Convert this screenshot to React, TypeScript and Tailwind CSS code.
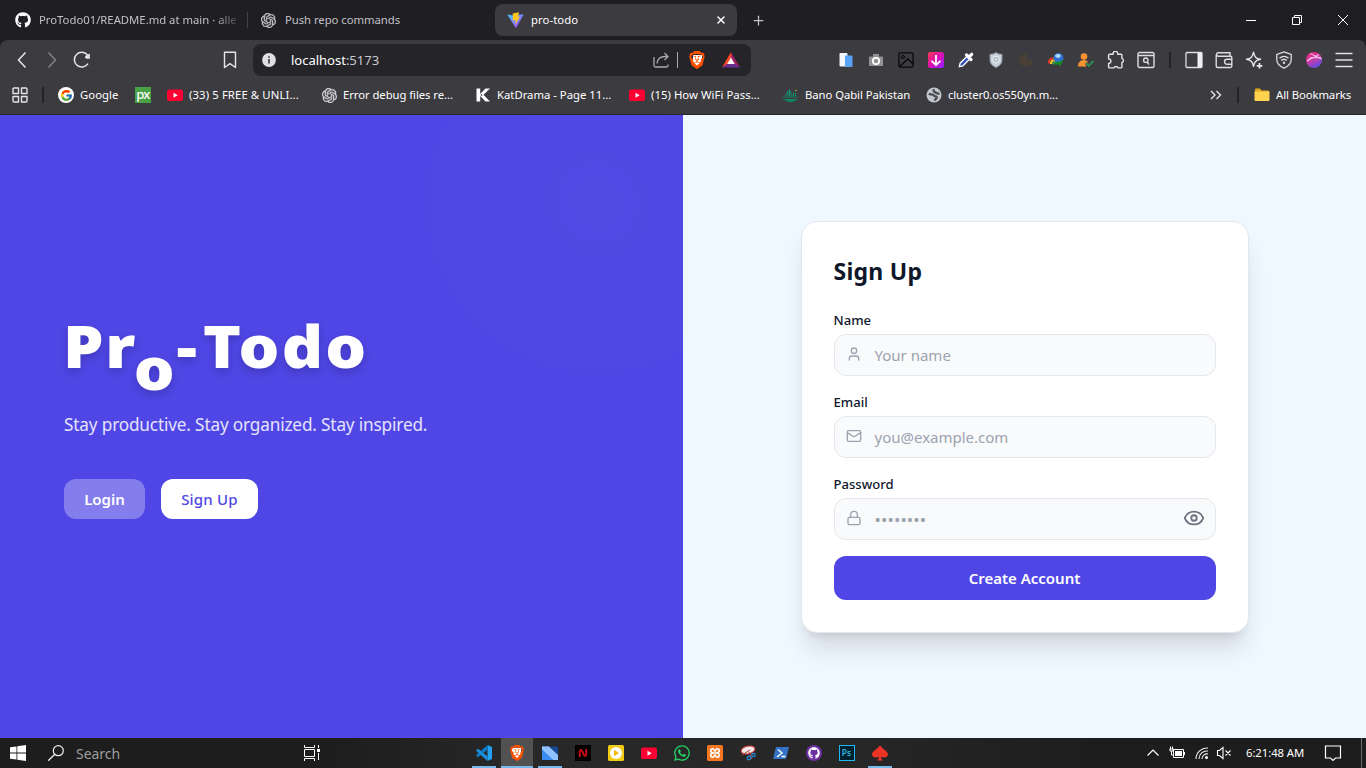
import React from "react";
import { User, Mail, Lock, Eye, X, Plus, Moon } from "lucide-react";
import { FaGithub, FaWhatsapp } from "react-icons/fa";
import { FcGoogle } from "react-icons/fc";
import { SiOpenai, SiBrave } from "react-icons/si";

type SvgProps = { className?: string; box?: string; children: React.ReactNode };

function Svg({ className = "size-4", box = "0 0 16 16", children }: SvgProps) {
  return (
    <svg viewBox={box} className={`shrink-0 ${className}`} fill="none">
      {children}
    </svg>
  );
}

function YouTube() {
  return (
    <Svg>
      <rect x="0" y="2.5" width="16" height="11.5" rx="2.6" fill="#ff0033" />
      <path d="M6.5 5.8v5l4.2-2.5z" fill="#fff" />
    </Svg>
  );
}

function BraveLion({ className }: { className: string }) {
  return (
    <span className={`relative flex shrink-0 items-center justify-center ${className}`}>
      <span className="h-[11px] w-[9px] rounded-b-[4px] bg-white" />
      <SiBrave className="absolute inset-0 size-full text-[#ff5000]" />
    </span>
  );
}

function ViteLogo() {
  return (
    <Svg className="size-[17px]">
      <defs>
        <linearGradient id="vite" x1="0" y1="0" x2="1" y2="1">
          <stop stopColor="#41d1ff" />
          <stop offset="1" stopColor="#bd34fe" />
        </linearGradient>
      </defs>
      <path d="M0.3 2.4 6 3.2l4.6-.9 5.1.1L8.4 15.4z" fill="url(#vite)" />
      <path d="M5.4 1.3 11.4.3l-1.4 4.2 2.2-.4-4.2 8 .2-4.6-2.6.5z" fill="#ffc81f" />
    </Svg>
  );
}

function TabStrip() {
  return (
    <div className="flex h-10 items-center bg-[#1f1e23] text-[11.3px] text-[#c2c1c6]">
      <div className="flex w-[247px] items-center pl-[15px]">
        <FaGithub className="size-4 shrink-0 text-white" />
        <span className="ml-2 whitespace-nowrap [mask-image:linear-gradient(to_right,black_88%,rgba(0,0,0,0.2))]">
          ProTodo01/README.md at main · alle
        </span>
      </div>
      <div className="h-4 w-px bg-[#414046]" />
      <div className="flex w-[247px] items-center pl-[13px]">
        <SiOpenai className="size-[15px] shrink-0" stroke="currentColor" strokeWidth={0.6} />
        <span className="ml-[9px] whitespace-nowrap tracking-[-0.04px]">Push repo commands</span>
      </div>
      <div className="flex h-8 w-[242px] items-center rounded-lg bg-[#3c3b40] pl-3 pr-[10px] text-white">
        <ViteLogo />
        <span className="ml-[7px] flex-1 tracking-[0.08px]">pro-todo</span>
        <X className="size-3" strokeWidth={3} />
      </div>
      <Plus className="ml-[14px] size-[15px]" strokeWidth={2} />
      <div className="ml-auto flex h-full text-white">
        <div className="flex w-[46px] items-center justify-center">
          <Svg className="size-[10px]" box="0 0 10 10"><path d="M0 5.5h10" stroke="currentColor" /></Svg>
        </div>
        <div className="flex w-[46px] items-center justify-center">
          <Svg className="size-[10px]" box="0 0 10 10"><path d="M.5 2.5h7v7h-7zM2.500 2.500v-2h7v7h-2" stroke="currentColor" /></Svg>
        </div>
        <div className="flex w-[46px] items-center justify-center">
          <Svg className="size-[10px]" box="0 0 10 10"><path d="m0 0 10 10M10 0 0 10" stroke="currentColor" /></Svg>
        </div>
      </div>
    </div>
  );
}

const extensions: React.ReactNode[] = [
  <Svg>
    <rect x="1.5" y="1" width="8" height="13.5" rx="1" fill="#f4f7fb" />
    <rect x="7" y="3.5" width="7.5" height="11.5" rx="1" fill="#5aa2f5" />
  </Svg>,
  <Svg>
    <path d="M5 2h6v2.5h3a1 1 0 0 1 1 1V14H1V5.5a1 1 0 0 1 1-1h3z" fill="#929292" />
    <circle cx="8" cy="9" r="3.2" stroke="#fff" strokeWidth="1.7" />
  </Svg>,
  <Svg>
    <rect x=".9" y=".9" width="14.2" height="14.2" rx="1.5" stroke="#08080a" strokeWidth="1.3" />
    <circle cx="5" cy="5" r="1.5" stroke="#08080a" strokeWidth="1.2" />
    <path d="m2 14 8-7 5 5" stroke="#08080a" strokeWidth="1.3" />
  </Svg>,
  <Svg>
    <defs>
      <linearGradient id="dl" x1="0" y1="0" x2="1" y2="1">
        <stop stopColor="#fa3c50" /><stop offset=".5" stopColor="#dc10b4" /><stop offset="1" stopColor="#8c20ff" />
      </linearGradient>
    </defs>
    <rect width="16" height="16" rx="2" fill="url(#dl)" />
    <path d="M8 3v10M3.5 8.8 8 13l4.500-4.200" stroke="#fff" strokeWidth="1.8" />
  </Svg>,
  <Svg>
    <path d="m1.300 14.700.8-3.500L9.500 3.800l2.700 2.700L4.800 13.900z" fill="#3458b8" stroke="#fff" strokeWidth="1.3" />
    <path d="m8.500 3 4.500 4.500M11 5l2.700-2.700" stroke="#fff" strokeWidth="3.2" strokeLinecap="round" />
  </Svg>,
  <Svg>
    <path d="M8 .5c2 1.500 4 1.800 6 1.800V8c0 4-3 6-6 7.500C5 14 2 12 2 8V2.300c2 0 4-.3 6-1.800z" fill="#c8d0d8" stroke="#8795a4" />
    <circle cx="8" cy="7.500" r="3.300" fill="#a7b6c5" stroke="#f4f7fa" />
    <circle cx="8" cy="7.500" r="1.200" fill="#e6ecf2" />
  </Svg>,
  <Moon className="size-[16px] text-[#4b4035]" fill="#4b4035" />,
  <Svg>
    <path d="M1 11.500c-.5-5.500 6-7.500 9.500-2" stroke="#e33c23" strokeWidth="2" />
    <path d="M3 12c0-4 4-5 6-2" stroke="#f6c829" strokeWidth="2" />
    <path d="M5 12.500c0-2 2-3 4-1.500" stroke="#39b54a" strokeWidth="1.500" />
    <circle cx="10.500" cy="5.900" r="4.900" fill="#2f6fd0" />
    <path d="M7 3.500c1.500-2 4.500-2 5.500-.5s-1 3-2.500 3-3-1-3-2.500z" fill="#a9d8f8" />
    <path d="M5.500 9.800c3 .8 6 .5 10-2.300L12 14.800l-1-2.300H6l2-1.500z" fill="#128c1d" />
  </Svg>,
  <Svg>
    <circle cx="6" cy="4.500" r="3.300" fill="#fa9433" />
    <path d="M0 14.500c0-8 10-8 10.500-3l-2.500 3z" fill="#fa9433" />
    <path d="m8 11 3 3.200 4.700-5.400" stroke="#3c3b40" strokeWidth="3" />
    <path d="m8.300 11.300 2.500 2.700 4.700-5.200" stroke="#25a45a" strokeWidth="1.500" />
  </Svg>,
  <Svg className="size-[18px]" box="0 0 18 18">
    <path d="M2.500 3.200H6.200a2.300 2.300 0 1 1 4.400 0H14a.9.900 0 0 1 .9.900V7.300a2.200 2.200 0 0 1 0 4.200V16a.9.900 0 0 1-.9.900H11.200a2.300 2.300 0 0 0-4.200 0H2.500a.9.900 0 0 1-.9-.9V12.500a2.200 2.200 0 0 0 0-4.600V4.100a.9.900 0 0 1 .9-.9z" stroke="#e4e3e8" strokeWidth="1.400" strokeLinejoin="round" />
  </Svg>,
  <Svg className="size-[18px]" box="0 0 18 18">
    <rect x="1" y="1.500" width="16" height="15" rx="1.500" stroke="#dedde2" strokeWidth="1.400" />
    <path d="M1 4.500h16m-5 9-2-2.500" stroke="#dedde2" strokeWidth="1.400" />
    <circle cx="8.800" cy="9.200" r="2.200" stroke="#dedde2" strokeWidth="1.400" />
  </Svg>,
];

const browserTools: React.ReactNode[] = [
  <Svg className="size-[18px]" box="0 0 18 18">
    <rect x="1" y="1.500" width="16" height="15" rx="1" stroke="#dedde2" strokeWidth="1.300" />
    <path d="M12.500 1.500H17v15h-4.500z" fill="#f0eff4" />
  </Svg>,
  <Svg className="size-[18px]" box="0 0 18 18">
    <path d="M16 5.200H3A1.800 1.800 0 0 1 3 1.700h12v3.500M1.200 3.500V15a1.500 1.500 0 0 0 1.500 1.500h12.600A1.500 1.500 0 0 0 16.800 15V6.500a1.300 1.300 0 0 0-1.300-1.300M16.800 8.200H12a2.500 2.500 0 0 0 0 5h4.800" stroke="#dedde2" strokeWidth="1.400" />
  </Svg>,
  <Svg className="size-[18px]" box="0 0 18 18">
    <path d="M8.500 1.200c.9 4.700 2.300 6.200 7 7.100-4.700.9-6.100 2.300-7 7.100-.9-4.800-2.300-6.200-7-7.100 4.700-.9 6.100-2.400 7-7.100z" stroke="#e8e7ec" strokeWidth="1.400" strokeLinejoin="round" />
    <path d="M14.500 11v7" stroke="#3c3b40" strokeWidth="5" />
    <path d="M14.500 12v5.500m-2.800-2.700h5.600" stroke="#e8e7ec" strokeWidth="1.700" />
  </Svg>,
  <Svg className="size-[18px]" box="0 0 18 18">
    <path d="M9 .9 16.200 3.500v5.300c0 4-3 6.500-7.200 8.400-4.200-1.900-7.200-4.400-7.200-8.400V3.500z" stroke="#dedde2" strokeWidth="1.300" />
    <path d="M4.500 7.200c2.600-2.300 6.400-2.300 9 0M6.200 9.500c1.600-1.500 4-1.500 5.600 0" stroke="#dedde2" strokeWidth="1.400" />
    <circle cx="9" cy="11.700" r="1.200" fill="#dedde2" />
  </Svg>,
  <Svg>
    <defs>
      <linearGradient id="leo" x1=".2" y1="0" x2=".7" y2="1">
        <stop stopColor="#f0267c" /><stop offset=".5" stopColor="#c33ca8" /><stop offset="1" stopColor="#544fe8" />
      </linearGradient>
    </defs>
    <circle cx="8" cy="8" r="8" fill="url(#leo)" />
    <path d="M1 9 13 2.500M4 1.500l12 5.500M1 9l4-3.500L15 6" stroke="#fbd5ec" strokeWidth=".9" />
  </Svg>,
  <Svg className="size-[18px]" box="0 0 18 18"><path d="M.5 2.500h17M.5 9h17M.5 15.500h17" stroke="#e0dfe4" strokeWidth="1.700" /></Svg>,
];

function Toolbar() {
  return (
    <div className="flex h-10 items-center text-[#e6e5ea]">
      <div className="flex w-[220px] items-center pl-[13px]">
        <Svg className="size-[18px]" box="0 0 18 18"><path d="M12.500 1.500 5.500 9l7 7.500" stroke="currentColor" strokeWidth="1.500" /></Svg>
        <Svg className="ml-3 size-[18px] text-[#84838a]" box="0 0 18 18"><path d="m5.500 1.500 7 7.500-7 7.500" stroke="currentColor" strokeWidth="1.500" /></Svg>
        <Svg className="ml-3 size-[18px]" box="0 0 18 18">
          <path d="M15 12.600A7.400 7.400 0 1 1 14.500 4" stroke="currentColor" strokeWidth="1.500" />
          <path d="M16.800 2.500v5.300h-3.500a2 2 0 0 1-1-2.800z" fill="currentColor" />
        </Svg>
      </div>
      <Svg className="size-5" box="0 0 20 20">
        <path d="M4.500 2.300h11v15.200L10 13.600l-5.500 3.900z" stroke="currentColor" strokeWidth="1.400" strokeLinejoin="round" />
      </Svg>
      <div className="ml-[13px] flex h-8 w-[498px] items-center rounded-lg bg-[#252429] pl-[9px] text-[13.1px]">
        <Svg className="size-[14px]" box="0 0 14 14">
          <circle cx="7" cy="7" r="6.900" fill="#dfdee3" />
          <path d="M7 6v4.500M7 3.300v1.500" stroke="#29282d" strokeWidth="1.500" />
        </Svg>
        <span className="ml-[15px] flex-1 pt-px tracking-[-0.05px] text-white">localhost<span className="text-[#c7c6cc]">:5173</span></span>
        <Svg className="size-4 text-[#a9a8ae]">
          <path d="M1 5v8.500A1.500 1.500 0 0 0 2.500 15h11a1.500 1.500 0 0 0 1.500-1.500v-1M4 11.500c.5-4.500 3-7 8-7H15M11.500 1 15 4.500 11.500 8" stroke="currentColor" strokeWidth="1.300" />
        </Svg>
        <div className="ml-2 h-4 w-px bg-[#a9a8ae]" />
        <BraveLion className="ml-[10px] size-[18px]" />
        <Svg className="ml-4 mr-[11px] size-[18px]" box="0 0 18 18">
          <path d="M9 1 0 16.500l5-2.500L9 7z" fill="#ff4724" />
          <path d="m9 1 9 15.500-5-2.500L9 7z" fill="#9e1f63" />
          <path d="M0 16.500h18L13 13H5z" fill="#662d91" />
          <path d="M9 6.500 12.800 13H5.200z" fill="#fff" />
        </Svg>
      </div>
      <div className="ml-auto flex">
        {extensions.map((icon, i) => (
          <div key={i} className="flex w-[30px] items-center justify-center">{icon}</div>
        ))}
      </div>
      <div className="ml-2 mr-2 h-4 w-0.5 bg-[#242328]" />
      <div className="mr-[7px] flex">
        {browserTools.map((icon, i) => (
          <div key={i} className="flex w-[30px] items-center justify-center">{icon}</div>
        ))}
      </div>
    </div>
  );
}

const bookmarks: { icon: React.ReactNode; label: string; box: string }[] = [
  { icon: <span className="flex size-4 items-center justify-center rounded-full bg-white"><FcGoogle className="size-[13px]" /></span>, label: "Google", box: "w-[77px] tracking-[0.05px]" },
  { icon: <span className="flex size-4 items-center justify-center bg-[#48a147] pb-0.5 text-[13px] leading-none font-medium tracking-[-0.6px]">px</span>, label: "", box: "w-8" },
  { icon: <YouTube />, label: "(33) 5 FREE & UNLI...", box: "w-[154px] tracking-[0.12px]" },
  {
    icon: <SiOpenai className="size-[15px] text-[#d5d4d8]" stroke="currentColor" strokeWidth={0.6} />,
    label: "Error debug files re...", box: "w-[154px] tracking-[-0.06px]",
  },
  {
    icon: <Svg><path d="M1.500 1.500h3.700v5.600L10.500 1.500H15L8.500 7.800 15 14.500h-4.500L5.200 9v5.500H1.500z" fill="#fff" /><path d="m5.500 8 1-1 1 1.200-.8.900z" fill="#3c3b40" /></Svg>,
    label: "KatDrama - Page 11...", box: "w-[154px]",
  },
  { icon: <YouTube />, label: "(15) How WiFi Pass...", box: "w-[154px] tracking-[0.06px]" },
  {
    icon: <Svg><path d="M0 10h14.500M2 12.500c3 2.500 8 2.500 11 0z" stroke="#118663" strokeWidth="1.200" fill="#118663" /><path d="M2.500 9 5 4v5M6.500 9V2.500l2.500 6.500M10.500 9V5M12.500 9V6" stroke="#129371" /><circle cx="13" cy="3.500" r=".8" fill="#b7c83d" /></Svg>,
    label: "Bano Qabil Pakistan", box: "w-[143px] tracking-[-0.06px]",
  },
  {
    icon: <Svg><circle cx="8" cy="8" r="7.500" fill="#c3c7cb" /><path d="M2.800 6.800c1.800 1 3.700.2 5 1.700s2.700.2 3 1.700-1.600 1.700-2.100 3.400M7.300 2.200c.5 1.300 0 2.300 1.500 2.900s2 2 4.700 1.300" stroke="#4a4b50" strokeWidth="2.300" /></Svg>,
    label: "cluster0.os550yn.m...", box: "w-[140px] tracking-[-0.12px]",
  },
];

function BookmarkBar() {
  return (
    <div className="flex h-[34px] items-center pb-1 text-[11.3px] whitespace-nowrap text-white">
      <Svg className="ml-3 size-4">
        <path d="M1 2a1 1 0 0 1 1-1h4.500v5.500H1zM9.500 1H14a1 1 0 0 1 1 1v4.500H9.500zM1 9.500h5.500V15H2a1 1 0 0 1-1-1zM9.500 9.500H15V14a1 1 0 0 1-1 1H9.500z" stroke="#e4e3e8" strokeWidth="1.400" strokeLinejoin="round" />
      </Svg>
      <div className="mr-[14px] ml-[14px] h-4 w-0.5 bg-[#242328]" />
      {bookmarks.map((b, i) => (
        <div key={i} className={`flex shrink-0 items-center gap-[6px] ${b.box}`}>
          <span className="flex w-4 shrink-0 justify-center">{b.icon}</span>
          {b.label && <span>{b.label}</span>}
        </div>
      ))}
      <Svg className="mr-[-1px] ml-auto size-3" box="0 0 12 12"><path d="m1 2 4 4-4 4M6.500 2l4 4-4 4" stroke="#e4e3e8" strokeWidth="1.400" /></Svg>
      <div className="ml-4 h-4 w-0.5 bg-[#242328]" />
      <Svg className="ml-[15px] size-4">
        <path d="M1 2.500a1 1 0 0 1 1-1h4l1.500 2H14a1 1 0 0 1 1 1V13H1z" fill="#e5a91e" />
        <path d="M.5 4.500h15V13a1 1 0 0 1-1 1h-13a1 1 0 0 1-1-1z" fill="#ffd24f" />
      </Svg>
      <span className="mr-[14px] ml-[6px] w-[76px] tracking-[-0.08px]">All Bookmarks</span>
    </div>
  );
}

function Hero() {
  return (
    <section className="flex w-1/2 flex-col bg-[#4f46e5] bg-[radial-gradient(circle_at_597px_88px,rgba(255,255,255,0.022),transparent_195px)] pt-[194px] pl-16 text-white">
      <h1 className="-ml-px flex h-[72px] origin-left scale-x-[1.09] items-center font-['Noto_Sans',sans-serif] text-[59px] leading-none font-black tracking-[1.5px] [text-shadow:0_4px_8px_rgba(0,0,0,0.18)]">
        <span>Pr</span>
        <span className="relative top-[22px] -ml-[3px]">o</span>
        <span>-</span>
        <span className="ml-1 tracking-[2px]">Todo</span>
      </h1>
      <p className="mt-[30px] h-7 text-[17.2px] leading-7 tracking-[-0.16px] whitespace-nowrap text-white/85">
        Stay productive. Stay organized. Stay inspired.
      </p>
      <div className="mt-10 flex gap-4 text-[15px] font-semibold">
        <button className="h-10 w-[81px] rounded-xl bg-white/30">Login</button>
        <button className="h-10 w-[97px] rounded-xl bg-white font-medium tracking-[0.2px] text-[#4f46e5]">Sign Up</button>
      </div>
    </section>
  );
}

type FieldProps = {
  label: string;
  icon: React.ReactNode;
  placeholder: React.ReactNode;
  trailing?: React.ReactNode;
};

function Field({ label, icon, placeholder, trailing }: FieldProps) {
  return (
    <div className="mb-4">
      <div className="mb-1 h-5 text-[13.1px] leading-5 font-medium">{label}</div>
      <div className="flex h-[42px] items-center rounded-xl border border-gray-200 bg-[#f9fafb] pr-[10px] pl-[11px]">
        <span className="flex w-4 justify-center pb-0.5 text-[#9ca3af]">{icon}</span>
        <span className="ml-[13px] flex h-10 flex-1 items-center pt-0.5 text-[15px] text-[#9ca3af]">{placeholder}</span>
        {trailing}
      </div>
    </div>
  );
}

function SignUpPanel() {
  return (
    <section className="flex w-1/2 items-center justify-center bg-[#f0f8ff] text-[#0f172a]">
      <div className="h-[412px] w-[448px] rounded-2xl border border-[#e2e8f0] bg-white p-8 shadow-[0_20px_25px_-5px_rgba(0,0,0,0.12),0_8px_10px_-6px_rgba(0,0,0,0.1)]">
        <h2 className="mb-6 h-8 pt-px text-[23px] leading-8 font-bold tracking-[0.25px]">Sign Up</h2>
        <Field label="Name" placeholder="Your name" icon={<User className="size-4 shrink-0" strokeWidth={2} />} />
        <Field label="Email" placeholder="you@example.com" icon={<Mail className="size-4 shrink-0" strokeWidth={2} />} />
        <Field
          label="Password"
          placeholder={<span className="text-[17px] tracking-[0.08px]">••••••••</span>}
          icon={<Lock className="size-4 shrink-0" strokeWidth={2} />}
          trailing={<Eye className="mb-px size-[22px] text-[#6b7280]" strokeWidth={2} />}
        />
        <button className="h-11 w-full rounded-xl bg-[#4f46e5] pt-px text-[15px] font-semibold text-white">Create Account</button>
      </div>
    </section>
  );
}

const apps: { icon: React.ReactNode; line?: string; active?: boolean }[] = [
  {
    icon: <Svg><path d="M11.500 0 16 2v12l-4.500 2z" fill="#23a0ee" /><path d="M11.500 0v4.800L2 12.300.3 11v-.9z" fill="#0f7ac4" /><path d="M11.500 16v-4.800L2 3.700.3 5v.9z" fill="#1b8fdc" /></Svg>,
    line: "w-6",
  },
  { icon: <BraveLion className="size-4" />, line: "w-8", active: true },
  {
    icon: <Svg><path d="M0 1.500h7l9 8.500v5H0z" fill="#2f7be0" /><path d="M0 1.500h7L16 10v5h-5L0 4.500z" fill="#8fc3ff" /><path d="M8 1.500h8v8z" fill="#164b9c" /><path d="M0 4.500V15h11z" fill="#3b8cf2" /></Svg>,
    line: "w-6",
  },
  { icon: <Svg><rect width="16" height="16" fill="#000" /><path d="M4.700 12V6.500c.2-2 1.800-2 2.600-.3l1.600 3.600c.8 1.700 2.300 1.500 2.300-.3V4" stroke="#d90a14" strokeWidth="1.800" /></Svg> },
  { icon: <Svg><rect width="16" height="16" rx="1.500" fill="#f2cb13" /><circle cx="8" cy="8" r="6" fill="#fff" /><path d="M6 4.800v6.400L11 8z" fill="#f2b90f" /></Svg> },
  { icon: <YouTube /> },
  { icon: <FaWhatsapp className="size-[18px] text-[#25d366]" /> },
  {
    icon: <Svg><rect width="16" height="16" rx="1.500" fill="#f37623" /><path d="M6.500 8h3M6.500 8C3 8 3 3.800 5.500 3.800S6.500 6 8 6s0-2.200 2.500-2.200S13 8 9.500 8M6.500 8C3 8 3 12.200 5.500 12.200S6.500 10 8 10s0 2.200 2.500 2.200S13 8 9.500 8" stroke="#fff" strokeWidth="1.600" /></Svg>,
  },
  { icon: <Svg><ellipse cx="8" cy="5" rx="7" ry="3.800" fill="#f1e9e9" stroke="#d33c34" strokeWidth="1" transform="rotate(-12 8 5)" /><path d="m2 10 8-5M9 7l3 7M14 8l-5 4" stroke="#b33a38" /><circle cx="9" cy="13" r="1.800" stroke="#238bd3" strokeWidth="1.300" /><circle cx="13.500" cy="10" r="1.700" stroke="#238bd3" strokeWidth="1.300" /></Svg> },
  { icon: <Svg><path d="M3 2h13l-3 12H0z" fill="#3473c6" /><path d="m5 4.500 4 3.500-5 4M8.500 11.500h4" stroke="#fff" strokeWidth="1.400" /></Svg> },
  { icon: <span className="flex size-4 items-center justify-center rounded-full bg-[#6e2fa0] text-white"><FaGithub className="size-3" /></span> },
  { icon: <span className="flex size-4 items-center justify-center border border-[#1fb9f4] bg-[#03202f] text-[8.5px] leading-none font-medium text-[#31c5f0]">Ps</span> },
  { icon: <Svg><path d="M8 0c2 4 8 6 8 9.500 0 3-4.500 4-7 2 0 2 1 3 2 4H5c1-1 2-2 2-4-2.500 2-7 1-7-2C0 6 6 4 8 0z" fill="#ec3326" /></Svg>, line: "w-6" },
];

function Taskbar() {
  return (
    <div className="flex h-[30px] items-center bg-[linear-gradient(to_right,#1d1d1d_24%,#282828_38%,#272727_62%,#1d1d1d_80%)] text-white">
      <Svg className="ml-[10px] size-4"><path d="M0 2.300 6.500 1.400v6.200H0zM7.300 1.300 16 0v7.600H7.300zM0 8.400h6.500v6.200L0 13.700zM7.300 8.400H16V16l-8.700-1.300z" fill="#fff" /></Svg>
      <Svg className="ml-[22px] size-4"><circle cx="10.300" cy="5.700" r="5" stroke="#eee" strokeWidth="1.200" /><path d="M6.800 9.300.3 15.700" stroke="#eee" strokeWidth="1.300" /></Svg>
      <span className="ml-3 w-[228px] pt-px text-[14px] tracking-[-0.05px] text-[#9d9d9d]">Search</span>
      <Svg><path d="M.5 0v2.500h10V0M.5 16v-2.500h10V16M.5 4.500h10v7H.5zM14.500 0v3M14.500 8v7" stroke="#fff" /><path d="M13 4h3v3h-3z" fill="#fff" /></Svg>
      <div className="ml-[147px] flex h-full">
        {apps.map((a, i) => (
          <div key={i} className="flex w-[33px] justify-center">
            <div className={`flex h-full w-8 flex-col items-center ${a.active ? "bg-[#515151]" : ""}`}>
              <span className="flex h-7 items-center pt-0.5">{a.icon}</span>
              {a.line && <span className={`h-0.5 bg-[#76b9ed] ${a.line}`} />}
            </div>
          </div>
        ))}
      </div>
      <div className="ml-auto flex items-center">
        <Svg className="size-3" box="0 0 12 12"><path d="m.5 8.500 5.500-5.500 5.500 5.500" stroke="#fff" strokeWidth="1.200" /></Svg>
        <Svg className="ml-[10px] size-4"><path d="M4.500 4.500h10v8h-10zM15.500 7v3M.5 4h4M1.500 1.500V4M3.500 1.500V4M1 4v2h3V4M2.500 6v4h2" stroke="#fff" /><path d="M6 6h7v5H6z" fill="#fff" /></Svg>
        <Svg className="ml-[10px] size-[14px]" box="0 0 14 14"><path d="M1 13A11 11 0 0 1 13 2M4 13a8 8 0 0 1 9-8M7 13a5 5 0 0 1 6-5" stroke="#eee" strokeWidth="1.100" /><circle cx="11.500" cy="11.500" r="1.500" fill="#fff" /></Svg>
        <Svg className="ml-[7px] size-4"><path d="M1.500 5.500h2l3.500-3v11l-3.500-3h-2zM9.500 5.500l5 5M14.500 5.500l-5 5" stroke="#fff" strokeWidth="1.100" /></Svg>
        <span className="ml-[14px] w-[58px] text-[11.3px] tracking-[-0.06px] whitespace-nowrap">6:21:48 AM</span>
        <Svg className="ml-5 size-[18px]" box="0 0 18 18"><path d="M1.500 2h15v12h-5L9 16.500 6.500 14h-5z" stroke="#fff" strokeWidth="1.200" /></Svg>
        <div className="ml-[19px] h-[30px] w-px bg-[#6a6a6a]" />
        <div className="w-1" />
      </div>
    </div>
  );
}

export default function App() {
  return (
    <div className="flex h-[768px] w-[1366px] flex-col overflow-hidden bg-[#1f1e23] font-['Noto_Sans','Open_Sans',sans-serif]">
      <TabStrip />
      <div className="h-[75px] rounded-t-lg border-b border-[#29282d] bg-[#3c3b40]">
        <Toolbar />
        <BookmarkBar />
      </div>
      <main className="flex h-[623px]">
        <Hero />
        <SignUpPanel />
      </main>
      <Taskbar />
    </div>
  );
}
